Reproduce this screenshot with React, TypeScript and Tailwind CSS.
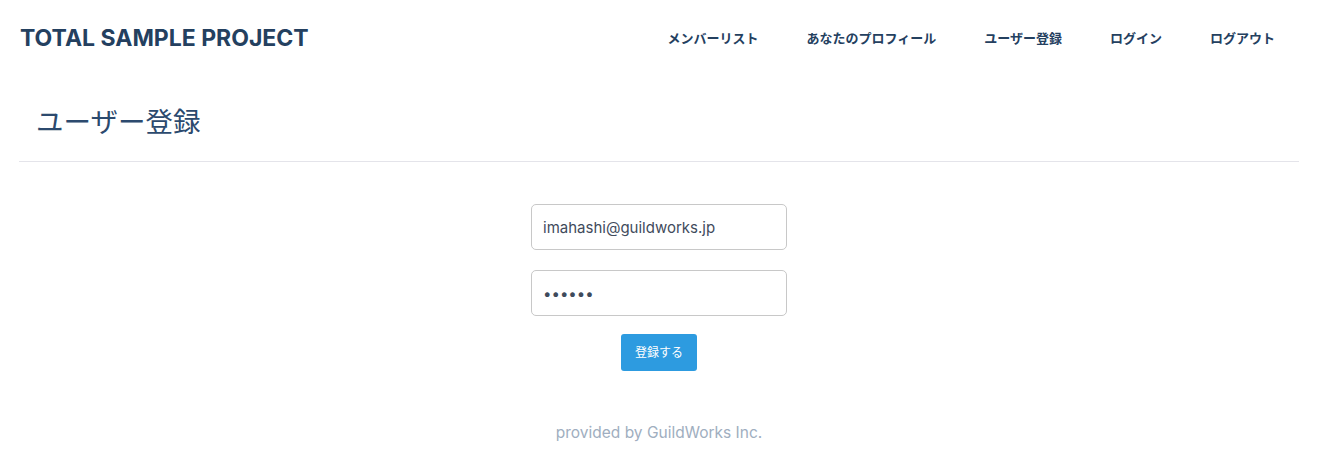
const navItems = ['メンバーリスト', 'あなたのプロフィール', 'ユーザー登録', 'ログイン', 'ログアウト'];

export default function App() {
	return (
		<div className="min-h-[461px] bg-white text-[#2c3e50] font-['Inter','Noto_Sans_CJK_JP',sans-serif]">
			<header className="flex h-[77px] items-center justify-between pl-5 pr-[27px]">
				<h1 className="text-[23px] font-bold text-[#24405f]">TOTAL SAMPLE PROJECT</h1>
				<nav className="flex">
					{navItems.map((item) => (
						<a key={item} className="px-6 text-[13px] font-bold text-[#24405f]">
							{item}
						</a>
					))}
				</nav>
			</header>
			<div className="w-[1318px]">
				<div className="mx-[19px] border-b border-[#e4e4ea] pb-[18px] pl-[17px] pt-[24px]">
					<h2 className="text-[27.5px] font-normal leading-[42px] text-[#2c4a6e]">ユーザー登録</h2>
				</div>
				<form className="flex flex-col items-center pt-[42px]">
					<input
						type="text"
						defaultValue="imahashi@guildworks.jp"
						className="h-[46px] w-[256px] rounded-[5px] border border-[#c8c8c8] px-[11px] text-[15px] text-[#3f4b5c] outline-none"
					/>
					<input
						type="password"
						defaultValue="123456"
						className="mt-[20px] h-[46px] w-[256px] rounded-[5px] border border-[#c8c8c8] px-[11px] text-[15px] text-[#3f4b5c] outline-none"
					/>
					<button
						type="button"
						className="mt-[18px] h-[37px] w-[76px] rounded-[3px] bg-[#2d9be0] text-[12px] text-white"
					>
						登録する
					</button>
				</form>
				<footer className="pt-[50px] text-center text-[15.5px] text-[#a0aec0]">provided by GuildWorks Inc.</footer>
			</div>
		</div>
	);
}
